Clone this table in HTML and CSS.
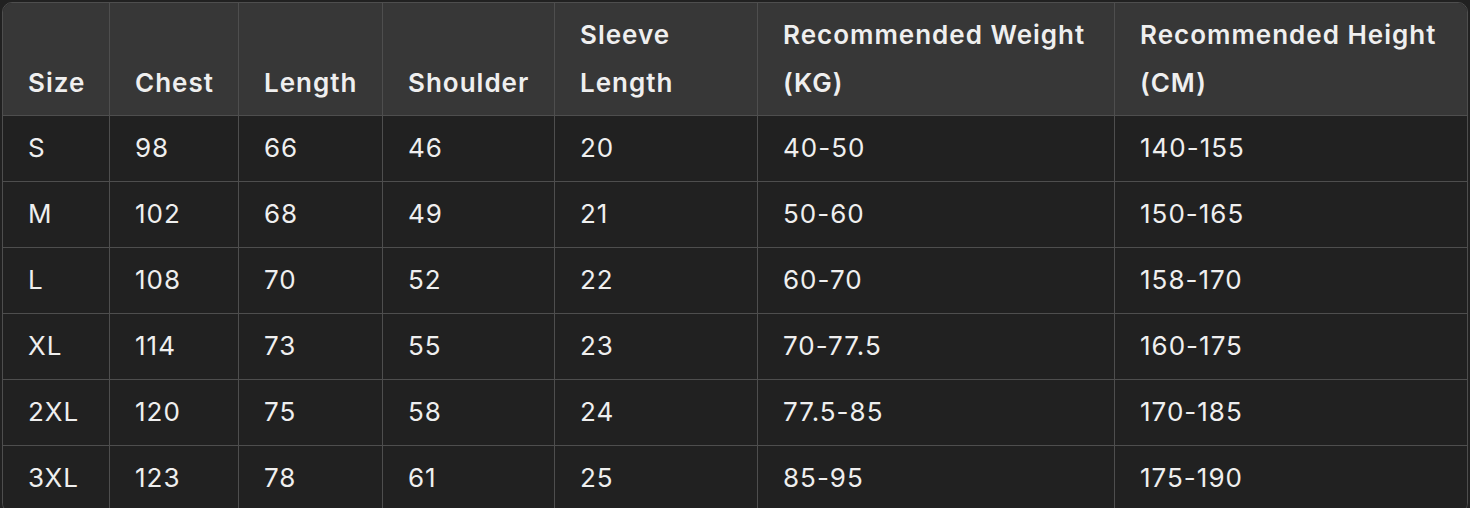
FILE: index.html
```html
<!DOCTYPE html>
<html>
<head>
<meta charset="utf-8">
<link rel="stylesheet" href="styles.css">
</head>
<body>
<div class="wrap">
<table class="size-table">
<colgroup>
<col class="c1"><col class="c2"><col class="c3"><col class="c4"><col class="c5"><col class="c6"><col class="c7">
</colgroup>
<thead>
<tr><th>Size</th><th>Chest</th><th>Length</th><th>Shoulder</th><th>Sleeve Length</th><th>Recommended Weight (KG)</th><th>Recommended Height (CM)</th></tr>
</thead>
<tbody>
<tr><td>S</td><td>98</td><td>66</td><td>46</td><td>20</td><td>40-50</td><td>140-155</td></tr>
<tr><td>M</td><td>102</td><td>68</td><td>49</td><td>21</td><td>50-60</td><td>150-165</td></tr>
<tr><td>L</td><td>108</td><td>70</td><td>52</td><td>22</td><td>60-70</td><td>158-170</td></tr>
<tr><td>XL</td><td>114</td><td>73</td><td>55</td><td>23</td><td>70-77.5</td><td>160-175</td></tr>
<tr><td>2XL</td><td>120</td><td>75</td><td>58</td><td>24</td><td>77.5-85</td><td>170-185</td></tr>
<tr><td>3XL</td><td>123</td><td>78</td><td>61</td><td>25</td><td>85-95</td><td>175-190</td></tr>
</tbody>
</table>
</div>
</body>
</html>
```

FILE: styles.css
```css
html, body {
  margin: 0;
  padding: 0;
  background: #212121;
}
.wrap {
  padding: 2px 0 0 2px;
}
.size-table {
  width: 1466px;
  table-layout: fixed;
  border-collapse: separate;
  border-spacing: 0;
  border: 1px solid #4e4e4e;
  border-radius: 10px;
  overflow: hidden;
  font-family: Inter, "Noto Sans", sans-serif;
  font-size: 26px;
  letter-spacing: 1px;
  line-height: 48px;
  color: #efefef;
}
.c1 { width: 107px; }
.c2 { width: 129px; }
.c3 { width: 144px; }
.c4 { width: 172px; }
.c5 { width: 203px; }
.c6 { width: 357px; }
.c7 { width: auto; }
th, td {
  text-align: left;
  padding: 8px 24px 9px 25px;
  border-right: 1px solid #4e4e4e;
  border-bottom: 1px solid #4e4e4e;
  white-space: normal;
}
th:last-child, td:last-child {
  border-right: none;
}
th {
  background: #373737;
  font-weight: 600;
  vertical-align: bottom;
  padding-bottom: 8px;
}
td {
  background: #212121;
  font-weight: 400;
}
```
